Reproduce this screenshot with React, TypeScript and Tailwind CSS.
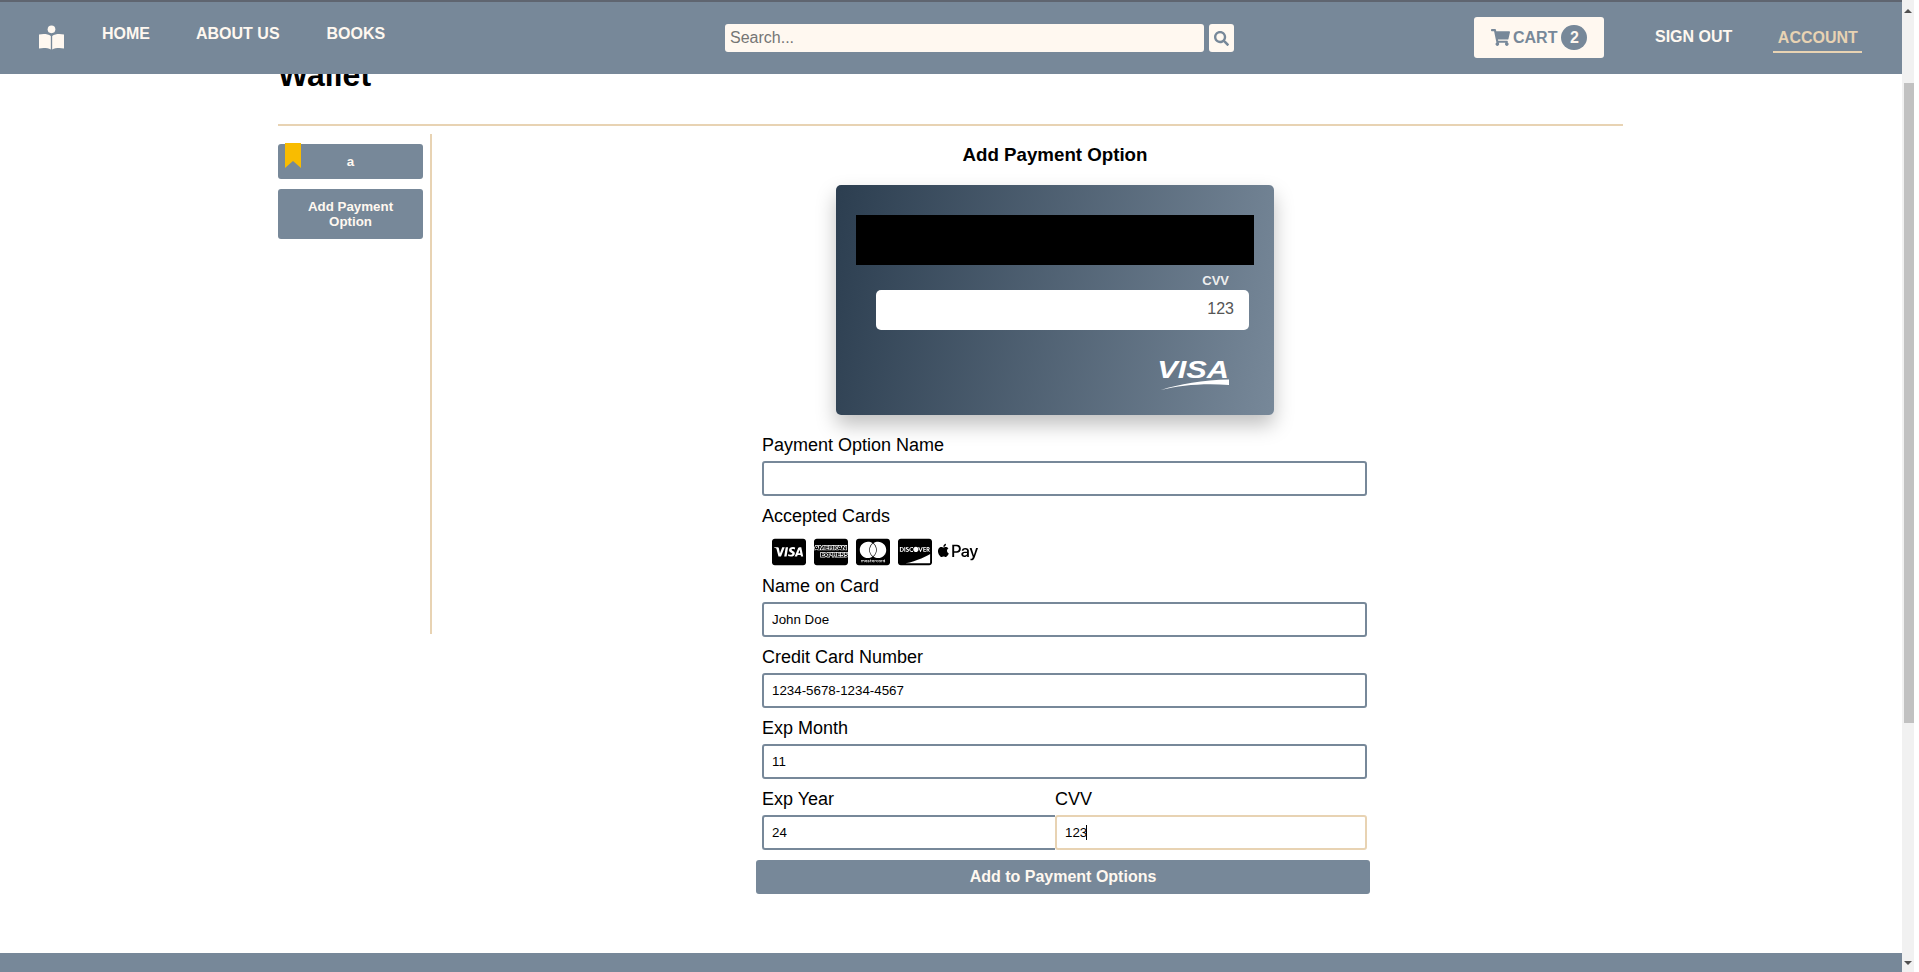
import React from "react";
import { FaApplePay, FaCcAmex, FaCcDiscover, FaCcMastercard, FaCcVisa, FaSearch, FaShoppingCart } from "react-icons/fa";

function Field({ label, value }: { label: string; value: string }) {
  return (
    <div>
      <label className="block h-5 mt-[9px] text-lg leading-[22px] text-black">{label}</label>
      <input
        readOnly
        value={value}
        className="block mt-[7px] w-[605px] h-[35px] px-2 text-[13.33px] text-black bg-white border-2 border-[#778899] rounded-[3px] outline-none"
      />
    </div>
  );
}

function Logo() {
  return (
    <svg width="25" height="25" viewBox="0 0 26 25" fill="#fff8f0">
      <circle cx="13" cy="4" r="4" />
      <path d="M0 9.5 C4 8.5 9 8.5 12.3 11 V25 C9 23.2 4 23 0 24 Z" />
      <path d="M26 9.5 C22 8.5 17 8.5 13.7 11 V25 C17 23.2 22 23 26 24 Z" />
    </svg>
  );
}

export default function App() {
  return (
    <div className="flex h-[972px] overflow-hidden bg-white font-['Liberation_Sans',Arial,sans-serif]">
      <div className="flex flex-col w-[1902px] h-full">
        <header className="relative z-10 shrink-0 flex h-[74px] bg-[#778899] border-t-2 border-[#5f6570]">
          <div className="flex w-[725px] pl-[39px] pt-[23px]">
            <Logo />
            <nav className="flex ml-[38px] gap-[46px] text-base font-bold leading-[18px] text-[#fff8f0]">
              <a>HOME</a>
              <a>ABOUT US</a>
              <a className="ml-px">BOOKS</a>
            </nav>
          </div>
          <div className="flex pt-[22px] gap-[5px]">
            <input
              readOnly
              placeholder="Search..."
              className="w-[479px] h-[28px] px-[5px] text-base bg-[#fff8f0] rounded-[3px] outline-none placeholder:text-[#757575]"
            />
            <button className="flex items-center justify-center w-[25px] h-[28px] bg-[#fff8f0] rounded-[3px] text-[#778899]">
              <FaSearch size={15} />
            </button>
          </div>
          <div className="flex ml-[240px] pt-[15px]">
            <button className="flex items-center w-[130px] h-[41px] pl-[17px] bg-[#fff8f0] rounded-[3px] text-base font-bold text-[#778899]">
              <FaShoppingCart size={19} />
              <span className="ml-[3px]">CART</span>
              <span className="flex items-center justify-center ml-[4px] w-[26px] h-[25px] rounded-full bg-[#778899] text-[#fff8f0]">2</span>
            </button>
            <a className="ml-[51px] mt-[11px] text-base font-bold leading-[18px] text-[#fff8f0]">SIGN OUT</a>
            <a className="ml-[41px] mt-[12px] w-[89px] h-[24px] border-b-2 border-[#e8d3b3] text-center text-base font-bold leading-[18px] text-[#e8d3b3]">ACCOUNT</a>
          </div>
        </header>

        <main className="flex-1 ml-[278px] w-[1345px]">
          <h1 className="-mt-[17px] h-[40px] text-[32px] font-bold leading-[37px] text-black">Wallet</h1>
          <div className="h-[2px] mt-[27px] bg-[#e8d3b3]" />
          <div className="flex mt-[8px]">
            <aside className="shrink-0 flex flex-col gap-[10px] w-[154px] h-[500px] pt-[10px] border-r-2 border-[#e8d3b3]">
              <button className="relative w-[145px] h-[35px] bg-[#778899] rounded-[3px] text-[13.33px] font-bold text-[#fff8f0]">
                <svg className="absolute left-[6px] -top-[1px]" width="18" height="25" viewBox="0 0 18 25" fill="#f9bc00">
                  <path d="M1 0 H17 V25 L9 18 L1 25 Z" />
                </svg>
                a
              </button>
              <button className="w-[145px] h-[50px] px-4 bg-[#778899] rounded-[3px] text-[13.33px] font-bold leading-[15px] text-[#fff8f0]">
                Add Payment Option
              </button>
            </aside>

            <section className="pl-[330px]">
              <div className="ml-[74px] w-[438px]">
                <h2 className="mt-[10px] h-[21px] text-center text-[18.72px] font-bold leading-[22px] text-black">Add Payment Option</h2>
                <div className="mt-[20px] w-[438px] h-[230px] pt-[30px] rounded-[5px] bg-[linear-gradient(100deg,#2c3e50,#778899)] shadow-[0_10px_20px_rgba(0,0,0,0.25)]">
                  <div className="mx-[20px] h-[50px] bg-black" />
                  <div className="mt-[8px] mr-[45px] h-[17px] text-right text-[13px] font-bold leading-[15px] text-[#eeeeee]">CVV</div>
                  <div className="ml-[40px] w-[373px] h-[40px] pr-[15px] rounded-[5px] bg-white text-right text-base leading-[38px] text-[#555555]">123</div>
                  <div className="flex flex-col items-end mt-[30px] mr-[45px] text-white">
                    <span className="h-[19px] origin-right scale-x-[1.28] text-[24px] font-bold italic leading-[19px]">VISA</span>
                    <svg width="68" height="11" viewBox="0 0 68 11" fill="#ffffff">
                      <path d="M0 11 C18 5 42 1 68 0.5 V6 C44 4 20 6 0 11 Z" />
                    </svg>
                  </div>
                </div>
              </div>

              <label className="block mt-[19px] h-5 text-lg leading-[22px] text-black">Payment Option Name</label>
              <input readOnly className="block mt-[7px] w-[605px] h-[35px] bg-white border-2 border-[#778899] rounded-[3px] outline-none" />

              <label className="block mt-[9px] h-5 text-lg leading-[22px] text-black">Accepted Cards</label>
              <div className="flex items-center gap-[8px] mt-[11px] ml-[10px] h-[32px] text-black">
                <FaCcVisa size={34} />
                <FaCcAmex size={34} />
                <FaCcMastercard size={34} />
                <FaCcDiscover size={34} />
                <FaApplePay size={40} className="-ml-[2px]" />
              </div>

              <div className="-mt-[2px]">
                <Field label="Name on Card" value="John Doe" />
              </div>
              <Field label="Credit Card Number" value="1234-5678-1234-4567" />
              <Field label="Exp Month" value="11" />

              <div className="flex w-[605px]">
                <div className="w-[293px]">
                  <label className="block h-5 mt-[9px] text-lg leading-[22px] text-black">Exp Year</label>
                  <input readOnly value="24" className="block mt-[7px] w-full h-[35px] px-2 text-[13.33px] text-black bg-white border-2 border-r-0 border-[#778899] rounded-l-[3px] outline-none" />
                </div>
                <div className="w-[312px]">
                  <label className="block h-5 mt-[9px] text-lg leading-[22px] text-black">CVV</label>
                  <div className="relative mt-[7px]">
                    <input readOnly value="123" className="block w-full h-[35px] px-2 text-[13.33px] text-black bg-white border-2 border-[#e8d3b3] rounded-[3px] outline-none" />
                    <span className="absolute left-[31px] top-[10px] w-px h-[15px] bg-black" />
                  </div>
                </div>
              </div>

              <button className="block mt-[10px] -ml-[6px] w-[614px] h-[34px] bg-[#778899] rounded-[3px] text-base font-bold text-[#fff8f0]">
                Add to Payment Options
              </button>
            </section>
          </div>
        </main>

        <footer className="shrink-0 h-[19px] bg-[#778899]" />
      </div>

      <div className="shrink-0 flex flex-col items-center w-[12px] h-full pt-[2px] bg-[#f1f1f1]">
        <div className="mt-[7px] border-x-[4px] border-b-[4px] border-x-transparent border-b-[#505050]" />
        <div className="mt-[70px] ml-[2px] w-[10px] h-[640px] bg-[#c1c1c1]" />
        <div className="mt-auto mb-[7px] border-x-[4px] border-t-[4px] border-x-transparent border-t-[#505050]" />
      </div>
    </div>
  );
}
